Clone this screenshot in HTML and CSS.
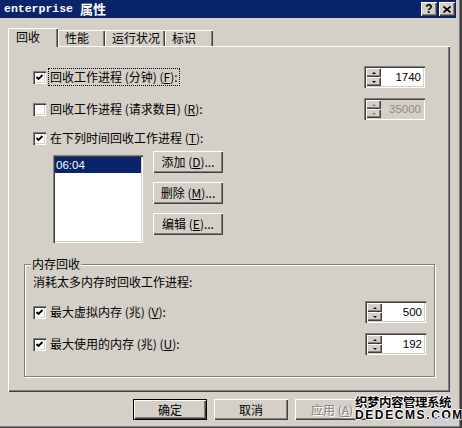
FILE: index.html
```html
<!DOCTYPE html>
<html>
<head>
  <title>enterprise 属性</title>
  <link rel="stylesheet" href="styles.css">
</head>
<body>
  <div class="window">
    <div class="titlebar">
      <span class="title"><span class="title-en">enterprise</span><span class="title-cn">属性</span></span>
      <div class="caption-btns">
        <span class="cap-btn cap-help">?</span>
        <span class="cap-btn">
          <svg width="8" height="7" viewBox="0 0 8 7"><path d="M0.5 0.5 L7.5 6.5 M7.5 0.5 L0.5 6.5" stroke="#000" stroke-width="1.6"/></svg>
        </span>
      </div>
    </div>

    <div class="tabs">
      <span class="tab active" style="width:50px">回收</span>
      <span class="tab" style="width:47px">性能</span>
      <span class="tab" style="width:60px">运行状况</span>
      <span class="tab" style="width:48px">标识</span>
    </div>

    <div class="panel">
      <div class="row">
        <label class="check-label">
          <span class="check checked"><svg width="9" height="9" viewBox="0 0 9 9"><path d="M1.5 4 L3.5 6 L7.5 2" stroke="#000" stroke-width="1.8" fill="none"/></svg></span>
          <span class="text focus">回收工作进程 (分钟) (<u>F</u>):</span>
        </label>
        <div class="spin">
          <div class="spin-btns"><span class="spin-up"></span><span class="spin-down"></span></div>
          <div class="spin-val">1740</div>
        </div>
      </div>

      <div class="row r2">
        <label class="check-label">
          <span class="check"></span>
          <span class="text">回收工作进程 (请求数目) (<u>R</u>):</span>
        </label>
        <div class="spin disabled">
          <div class="spin-btns"><span class="spin-up"></span><span class="spin-down"></span></div>
          <div class="spin-val">35000</div>
        </div>
      </div>

      <div class="row r3">
        <label class="check-label">
          <span class="check checked"><svg width="9" height="9" viewBox="0 0 9 9"><path d="M1.5 4 L3.5 6 L7.5 2" stroke="#000" stroke-width="1.8" fill="none"/></svg></span>
          <span class="text">在下列时间回收工作进程 (<u>T</u>):</span>
        </label>
      </div>

      <div class="schedule">
        <div class="list">
          <div class="list-item">06:04</div>
        </div>
        <div class="side-btns">
          <span class="btn">添加 (<u>D</u>)...</span>
          <span class="btn">删除 (<u>M</u>)...</span>
          <span class="btn">编辑 (<u>E</u>)...</span>
        </div>
      </div>

      <div class="group">
        <div class="group-title">内存回收</div>
        <div class="group-desc">消耗太多内存时回收工作进程:</div>

        <div class="row g1">
          <label class="check-label">
            <span class="check checked"><svg width="9" height="9" viewBox="0 0 9 9"><path d="M1.5 4 L3.5 6 L7.5 2" stroke="#000" stroke-width="1.8" fill="none"/></svg></span>
            <span class="text">最大虚拟内存 (兆) (<u>V</u>):</span>
          </label>
          <div class="spin">
            <div class="spin-btns"><span class="spin-up"></span><span class="spin-down"></span></div>
            <div class="spin-val">500</div>
          </div>
        </div>

        <div class="row g2">
          <label class="check-label">
            <span class="check checked"><svg width="9" height="9" viewBox="0 0 9 9"><path d="M1.5 4 L3.5 6 L7.5 2" stroke="#000" stroke-width="1.8" fill="none"/></svg></span>
            <span class="text">最大使用的内存 (兆) (<u>U</u>):</span>
          </label>
          <div class="spin">
            <div class="spin-btns"><span class="spin-up"></span><span class="spin-down"></span></div>
            <div class="spin-val">192</div>
          </div>
        </div>
      </div>
    </div>

    <div class="footer">
      <span class="btn btn-lg default">确定</span>
      <span class="btn btn-lg">取消</span>
      <span class="btn btn-lg disabled">应用 (<u>A</u>)</span>
    </div>

    <div class="watermark">
      <div class="wm-cn">织梦内容管理系统</div>
      <div class="wm-en">DEDECMS.COM</div>
      <div class="wm-idc">IDCY</div>
    </div>
  </div>
</body>
</html>
```

FILE: styles.css
```css
* {
  box-sizing: border-box;
}

body {
  margin: 0;
  background-color: #d4d0c8;
  font-family: "Noto Sans CJK SC", sans-serif;
  font-size: 12px;
  line-height: 14px;
  color: #000;
}

.window {
  position: relative;
  width: 462px;
  height: 428px;
  padding-right: 6px;
  background-color: #d4d0c8;
  box-shadow: inset -2px -1px 0 #404040, inset -3px -2px 0 #808080;
}

/* title bar */
.titlebar {
  display: flex;
  align-items: center;
  justify-content: space-between;
  height: 18px;
  padding: 0 1px 0 4px;
  background-color: #0a246a;
  color: #fff;
}

.title {
  display: flex;
  align-items: center;
  line-height: 18px;
}

.title-en {
  font-family: "Liberation Mono", monospace;
  font-weight: bold;
  font-size: 11.5px;
}

.title-cn {
  margin-left: 7px;
  font-weight: bold;
  font-size: 13px;
}

.caption-btns {
  display: flex;
  gap: 2px;
}

.cap-btn {
  display: flex;
  align-items: center;
  justify-content: center;
  width: 16px;
  height: 14px;
  background-color: #d4d0c8;
  box-shadow: inset 1px 1px 0 #fff, inset -1px -1px 0 #404040, inset -2px -2px 0 #808080;
}

.cap-help {
  font-family: "Liberation Sans", sans-serif;
  font-weight: bold;
  font-size: 12px;
  color: #000;
}

/* tabs */
.tabs {
  display: flex;
  align-items: flex-end;
  height: 18px;
  margin: 10px 0 0 8px;
}

.tab {
  height: 16px;
  padding-left: 7px;
  line-height: 16px;
  box-shadow: inset 1px 1px 0 #fff, inset -1px 0 0 #404040, inset -2px 0 0 #808080;
}

.tab.active {
  position: relative;
  z-index: 1;
  height: 19px;
  margin-bottom: -1px;
  padding-left: 8px;
  line-height: 18px;
  background-color: #d4d0c8;
}

.panel {
  width: 442px;
  height: 346px;
  margin-left: 8px;
  padding: 20px 25px 0;
  box-shadow: inset 1px 1px 0 #fff, inset -1px -1px 0 #404040, inset -2px -2px 0 #808080;
}

/* rows with checkbox + spinner */
.row {
  display: flex;
  align-items: center;
  height: 22px;
}

.r2 {
  margin-top: 10px;
}

.r3 {
  margin-top: 7px;
}

.check-label {
  display: flex;
  align-items: center;
  gap: 3px;
}

.check {
  display: flex;
  align-items: center;
  justify-content: center;
  width: 13px;
  height: 13px;
  background-color: #fff;
  box-shadow: inset 1px 1px 0 #808080, inset 2px 2px 0 #404040, inset -1px -1px 0 #fff, inset -2px -2px 0 #d4d0c8;
}

.text {
  padding: 1px 1px;
}

.focus {
  outline: 1px dotted #000;
}

.spin {
  display: flex;
  width: 61px;
  height: 22px;
  margin-left: auto;
  padding: 2px;
  background-color: #fff;
  box-shadow: inset 1px 1px 0 #808080, inset 2px 2px 0 #404040, inset -1px -1px 0 #fff, inset -2px -2px 0 #d4d0c8;
}

.spin-btns {
  display: flex;
  flex-direction: column;
  width: 15px;
}

.spin-up,
.spin-down {
  flex: 1;
  display: flex;
  align-items: center;
  justify-content: center;
  background-color: #d4d0c8;
  box-shadow: inset 1px 1px 0 #fff, inset -1px -1px 0 #404040, inset -2px -2px 0 #808080;
}

.spin-up::before {
  content: "";
  border-left: 2px solid transparent;
  border-right: 2px solid transparent;
  border-bottom: 2px solid #000;
}

.spin-down::before {
  content: "";
  border-left: 2px solid transparent;
  border-right: 2px solid transparent;
  border-top: 2px solid #000;
}

.spin-val {
  flex: 1;
  padding-right: 2px;
  text-align: right;
  font-family: "Liberation Sans", sans-serif;
  font-size: 11.5px;
  line-height: 18px;
}

.spin.disabled {
  background-color: #d4d0c8;
}

.spin.disabled .spin-val {
  color: #8c8a86;
}

.spin.disabled .spin-up::before {
  border-bottom-color: #808080;
}

.spin.disabled .spin-down::before {
  border-top-color: #808080;
}

/* schedule list */
.schedule {
  display: flex;
  gap: 10px;
  margin: 2px 0 0 20px;
}

.list {
  width: 90px;
  height: 88px;
  margin-top: 4px;
  padding: 2px;
  background-color: #fff;
  box-shadow: inset 1px 1px 0 #808080, inset 2px 2px 0 #404040, inset -1px -1px 0 #fff, inset -2px -2px 0 #d4d0c8;
}

.list-item {
  height: 16px;
  padding-left: 1px;
  line-height: 16px;
  background-color: #0a246a;
  color: #fff;
  font-family: "Liberation Sans", sans-serif;
  font-size: 11.5px;
}

.side-btns {
  display: flex;
  flex-direction: column;
  gap: 9px;
}

.btn {
  display: flex;
  align-items: center;
  justify-content: center;
  width: 70px;
  height: 22px;
  background-color: #d4d0c8;
  box-shadow: inset 1px 1px 0 #fff, inset -1px -1px 0 #404040, inset -2px -2px 0 #808080;
}

/* memory group */
.group {
  height: 113px;
  margin: 21px -10px 0 -9px;
  padding: 0 8px;
  border: 1px solid #808080;
  box-shadow: 1px 1px 0 #fff, inset 1px 1px 0 #fff;
}

.group-title {
  width: fit-content;
  margin: -8px 0 0 -2px;
  padding: 0 1px;
  background-color: #d4d0c8;
}

.group-desc {
  margin-top: 4px;
}

.g1 {
  margin-top: 12px;
}

.g2 {
  margin-top: 10px;
}

/* dialog buttons */
.footer {
  display: flex;
  gap: 7px;
  margin: 7px 0 0 133px;
}

.btn-lg {
  width: 74px;
  height: 21px;
}

.btn.default {
  border: 1px solid #000;
}

.btn.disabled {
  color: #808080;
  text-shadow: 1px 1px 0 #fff;
}

/* site watermark */
.watermark {
  position: absolute;
  left: 355px;
  top: 394px;
  width: 104px;
  font-weight: bold;
  color: #000;
  text-shadow: 1px 0 0 #fff, -1px 0 0 #fff, 0 1px 0 #fff, 0 -1px 0 #fff;
}

.wm-cn {
  font-size: 12.5px;
  line-height: 15px;
  letter-spacing: -0.5px;
}

.wm-en {
  font-family: "Liberation Sans", sans-serif;
  font-size: 12px;
  line-height: 13px;
  letter-spacing: 1.6px;
}

.wm-idc {
  position: absolute;
  left: 78px;
  top: 23px;
  font-family: "Liberation Sans", sans-serif;
  font-size: 10px;
  line-height: 10px;
  color: #c8cfe6;
  text-shadow: none;
}
```
